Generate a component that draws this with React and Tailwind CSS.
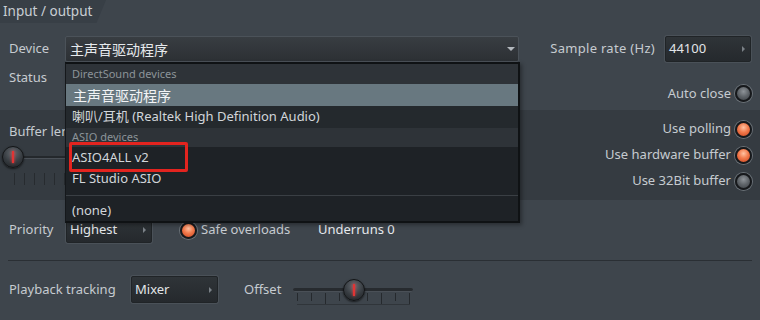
import React from 'react'

const FONT = "font-['Noto_Sans','Noto_Sans_CJK_SC',sans-serif]"

function Radio({ on }) {
  return (
    <span
      className={
        on
          ? 'block w-[17px] h-[17px] rounded-full border-2 border-[#17191c] shadow-[0_0_0_1px_#6a7177] bg-[radial-gradient(circle_at_50%_35%,#ffc2a2_0%,#f27a4c_45%,#c9421d_100%)]'
          : 'block w-[17px] h-[17px] rounded-full border-2 border-[#17191c] shadow-[0_0_0_1px_#6a7177] bg-[radial-gradient(circle_at_50%_35%,#8e9398_0%,#5e6368_50%,#3a3e43_100%)]'
      }
    />
  )
}

function Knob() {
  return (
    <div className="relative w-[22px] h-[22px] rounded-full border border-[#131517] bg-[radial-gradient(circle_at_50%_30%,#646a70_0%,#363b40_55%,#1b1e21_100%)] shadow-[0_1px_2px_rgba(0,0,0,0.6)]">
      <div className="absolute left-[9px] top-[4px] w-[2px] h-[12px] bg-[#e03434] shadow-[0_0_3px_#ff3a3a]" />
    </div>
  )
}

function Select({ value, width }) {
  return (
    <div
      className={`${width} h-full flex items-center justify-between pl-[3px] pr-[5px] rounded-[2px] border border-[#202427] shadow-[0_0_0_1px_#4a5158] bg-[linear-gradient(#2f3438,#25292d)] text-[#e2e5e8]`}
    >
      <span>{value}</span>
      <span className="w-0 h-0 border-y-[3px] border-y-transparent border-l-[3px] border-l-[#7b8187]" />
    </div>
  )
}

function Option({ label, right }) {
  return (
    <div className="flex items-center justify-end gap-[4px] h-[26px]">
      <span>{label}</span>
      <Radio on={right} />
    </div>
  )
}

const ticksBuffer = [9, 9, 9, 9, 9, 9]
const ticksOffset = [8, 8, 11, 8, 8, 8, 11, 8, 11]

export default function App() {
  return (
    <div className={`relative w-[760px] h-[320px] overflow-hidden bg-[#3e454c] text-[13px] text-[#c6cbd0] ${FONT}`}>
      {/* tab header */}
      <div className="h-[23px] flex">
        <div className="w-[106px] h-full bg-[#383f46] [clip-path:polygon(0_0,100%_0,91%_100%,0_100%)] pl-[3px] flex items-center text-[13.5px] text-[#c9ced3]">
          Input / output
        </div>
      </div>

      {/* device row */}
      <div className="mt-[13px] h-[26px] px-[9px] flex items-center">
        <div className="w-[56px]">Device</div>
        <div className="w-[454px] h-full flex items-center justify-between pl-[4px] pr-[3px] rounded-[2px] border border-[#4b5259] bg-[linear-gradient(#383d42,#2c3034)] text-[14px] text-[#e6e9ec]">
          <span>主声音驱动程序</span>
          <span className="w-0 h-0 border-x-[4px] border-x-transparent border-t-[4px] border-t-[#b3b8bd]" />
        </div>
        <div className="ml-auto flex items-center h-full">
          <span className="mr-[10px] tracking-[0.3px]">Sample rate (Hz)</span>
          <Select value="44100" width="w-[86px]" />
        </div>
      </div>

      {/* status row */}
      <div className="h-[48px] px-[8px] flex justify-between items-start">
        <div className="pt-[6px] pl-[1px] leading-[18px]">Status</div>
        <div className="pt-[22px] flex items-center gap-[4px]">
          <span>Auto close</span>
          <Radio on={false} />
        </div>
      </div>

      {/* buffer band */}
      <div className="h-[90px] bg-[#353b41] flex justify-between pr-[8px]">
        <div className="pt-[12px] pl-[2px]">
          <div className="pl-[7px] leading-[18px]">Buffer length</div>
          <div className="mt-[6px] flex items-center">
            <Knob />
            <div className="w-[60px] h-[3px] bg-[#24282c] border-b border-[#4a5057]" />
          </div>
          <div className="mt-[5px] ml-[12px] flex gap-[9px]">
            {ticksBuffer.map((h, i) => (
              <div key={i} className="w-px h-[12px] bg-[#272b2f]" />
            ))}
          </div>
        </div>
        <div className="pt-[6px]">
          <Option label="Use polling" right />
          <Option label="Use hardware buffer" right />
          <Option label="Use 32Bit buffer" right={false} />
        </div>
      </div>

      {/* priority row */}
      <div className="mt-[17px] h-[26px] px-[9px] flex items-center">
        <div className="w-[57px]">Priority</div>
        <Select value="Highest" width="w-[86px]" />
        <div className="ml-[28px] w-[138px] flex items-center gap-[4px]">
          <Radio on />
          <span>Safe overloads</span>
        </div>
        <div className="text-[#e6e9ec]">Underruns 0</div>
      </div>

      <div className="mt-[17px] mx-[8px] h-px bg-[#2a2f34]" />

      {/* playback row */}
      <div className="mt-[15px] h-[27px] px-[9px] flex items-center">
        <div className="w-[122px]">Playback tracking</div>
        <Select value="Mixer" width="w-[87px]" />
        <div className="ml-[26px] w-[49px]">Offset</div>
        <div className="relative w-[120px] h-full">
          <div className="mt-[12px] h-[4px] rounded-[2px] bg-[#272b2f] border-b border-[#4a5057]" />
          <div className="mt-[1px] ml-[4px] w-[113px] flex gap-[13px] items-start border-b border-[#30353a]">
            {ticksOffset.map((h, i) => (
              <div key={i} className={h > 9 ? 'w-px h-[11px] bg-[#25292d]' : 'w-px h-[8px] bg-[#25292d]'} />
            ))}
          </div>
          <div className="absolute left-[50px] top-[3px]">
            <Knob />
          </div>
        </div>
      </div>

      {/* open dropdown list */}
      <div className="absolute left-[65px] top-[62px] w-[455px] bg-[#1e2226] border-2 border-[#0f1214] border-l-[#15181b] border-l shadow-[2px_2px_4px_rgba(0,0,0,0.35)] text-[#d2d6da]">
        <div className="h-[20px] pl-[6px] flex items-center bg-[#2e3338] text-[11px] text-[#8c9399]">DirectSound devices</div>
        <div className="h-[22px] pl-[7px] flex items-center bg-[#687880] text-[14px] text-[#f2f4f6]">主声音驱动程序</div>
        <div className="h-[22px] pl-[6px] flex items-center bg-[#24292d]">喇叭/耳机 (Realtek High Definition Audio)</div>
        <div className="h-[19px] pl-[6px] flex items-center bg-[#2e3338] text-[11px] text-[#8c9399]">ASIO devices</div>
        <div className="h-[21px] pl-[6px] flex items-center">ASIO4ALL v2</div>
        <div className="h-[22px] pl-[6px] flex items-center">FL Studio ASIO</div>
        <div className="h-[10px] flex items-center">
          <div className="w-full h-px bg-[#3a3f44]" />
        </div>
        <div className="h-[21px] pl-[6px] flex items-center">(none)</div>
      </div>

      {/* red highlight box */}
      <div className="absolute left-[69px] top-[142px] w-[119px] h-[30px] border-[3px] border-[#e3241f] rounded-[2px]" />
    </div>
  )
}
